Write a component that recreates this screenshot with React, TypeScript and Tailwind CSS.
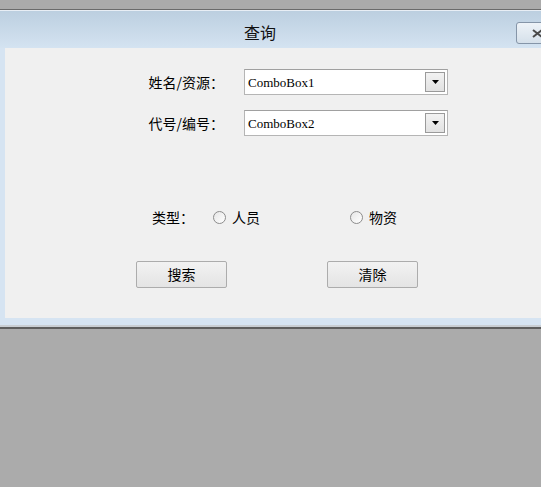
import React from "react"

const cjk = { fontFamily: '"Noto Sans CJK SC", "Noto Sans", sans-serif' }
const serif = { fontFamily: '"Liberation Serif", "DejaVu Serif", serif' }

function ComboBox({ value }: { value: string }) {
  return (
    <div className="flex h-[26px] w-[204px] items-center border border-[#b5b5b5] border-t-[#a0a0a0] bg-white pl-[3px] pr-[2px]">
      <span className="flex-1 text-[13px] leading-none text-black" style={serif}>
        {value}
      </span>
      <div className="flex h-[20px] w-[20px] items-center justify-center border border-[#9a9a9a] bg-gradient-to-b from-[#f2f2f2] to-[#e2e2e2]">
        <svg width="7" height="4" viewBox="0 0 7 4">
          <path d="M0 0h7L3.5 4z" fill="#000" />
        </svg>
      </div>
    </div>
  )
}

function Radio({ label }: { label: string }) {
  return (
    <div className="flex items-center gap-[6px]">
      <span className="h-[13px] w-[13px] rounded-full border border-[#8c8c8c] bg-gradient-to-br from-[#e6e6e6] to-white" />
      <span className="text-[14px] leading-none text-black">{label}</span>
    </div>
  )
}

function Button({ label }: { label: string }) {
  return (
    <button className="flex h-[27px] w-[91px] items-center justify-center rounded-[2px] border border-[#acacac] bg-gradient-to-b from-[#f2f2f2] to-[#e4e4e4] text-[14px] text-black">
      {label}
    </button>
  )
}

export default function App() {
  return (
    <div className="h-[487px] w-[541px] overflow-hidden bg-[#ababab] pt-[9px]" style={cjk}>
      <div className="border-t border-[#6b6b6b]">
        <div className="border-t border-[#e8eef5]">
          {/* title bar */}
          <div className="relative flex h-[37px] items-center bg-gradient-to-b from-[#bccfe0] to-[#d4e3f1] pl-[244px] pt-[4px]">
            <span className="text-[16px] text-[#111]">查询</span>
            <div className="absolute left-[516px] top-[11px] flex h-[22px] w-[43px] items-center rounded-[3px] border border-[#8595a8] bg-gradient-to-b from-[#eef3f8] to-[#d5e0ea] pl-[15px]">
              <svg width="11" height="9" viewBox="0 0 11 9">
                <path d="M1 1l9 7M10 1L1 8" stroke="#4a4a4a" strokeWidth="2" />
              </svg>
            </div>
          </div>

          {/* client area */}
          <div className="bg-[#d6e4f2] pl-[5px]">
            <div className="h-[270px] bg-[#f0f0f0] pt-[21px]">
              <div className="flex items-center pl-[135px]">
                <span className="w-[84px] text-right text-[14px] text-black">姓名/资源：</span>
                <div className="ml-[20px]">
                  <ComboBox value="ComboBox1" />
                </div>
              </div>
              <div className="mt-[15px] flex items-center pl-[135px]">
                <span className="w-[84px] text-right text-[14px] text-black">代号/编号：</span>
                <div className="ml-[20px]">
                  <ComboBox value="ComboBox2" />
                </div>
              </div>

              <div className="mt-[71px] flex h-[20px] items-center pl-[147px]">
                <span className="text-[14px] leading-none text-black">类型：</span>
                <div className="ml-[19px]">
                  <Radio label="人员" />
                </div>
                <div className="ml-[90px]">
                  <Radio label="物资" />
                </div>
              </div>

              <div className="mt-[34px] flex pl-[131px]">
                <Button label="搜索" />
                <div className="ml-[100px]">
                  <Button label="清除" />
                </div>
              </div>
            </div>
            <div className="h-[7px]" />
          </div>
          <div className="h-[2px] bg-[#c9ced3]" />
          <div className="h-[2px] bg-[#5e5e5e]" />
        </div>
      </div>
    </div>
  )
}
